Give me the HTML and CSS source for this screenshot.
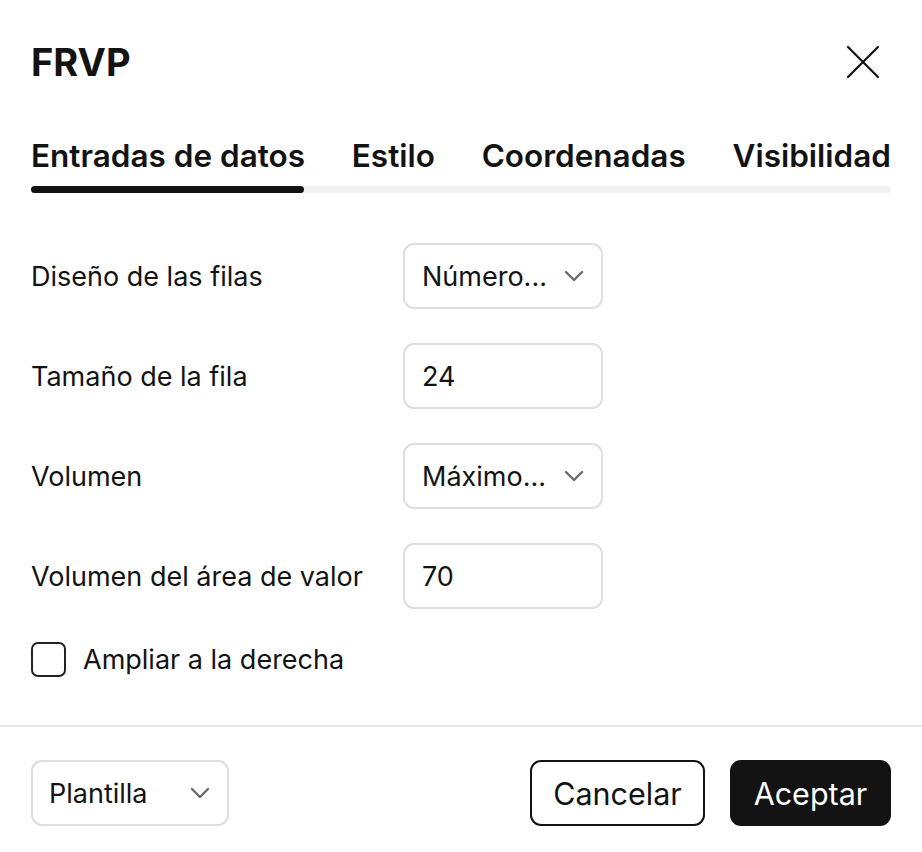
FILE: index.html
```html
<!DOCTYPE html>
<html lang="es">
<head>
<meta charset="utf-8">
<title>FRVP</title>
<link rel="stylesheet" href="styles.css">
</head>
<body>
<div class="dialog">
  <header class="header">
    <h1 class="title">FRVP</h1>
    <button class="close" aria-label="Cerrar">
      <svg width="34" height="34" viewBox="0 0 34 34"><path d="M2 2 L32 32 M32 2 L2 32" stroke="#131313" stroke-width="2.2" stroke-linecap="round" fill="none"/></svg>
    </button>
  </header>
  <nav class="tabs">
    <span class="tab active">Entradas de datos</span>
    <span class="tab">Estilo</span>
    <span class="tab">Coordenadas</span>
    <span class="tab">Visibilidad</span>
  </nav>
  <div class="track"><div class="indicator"></div></div>

  <div class="form">
    <label class="label">Diseño de las filas</label>
    <div class="control select"><span class="value">Número...</span><svg class="chev" width="20" height="12" viewBox="0 0 20 12"><path d="M2 2 L10 10 L18 2" stroke="#6a6a6a" stroke-width="2.4" fill="none" stroke-linecap="round" stroke-linejoin="round"/></svg></div>

    <label class="label">Tamaño de la fila</label>
    <div class="control"><span class="value">24</span></div>

    <label class="label">Volumen</label>
    <div class="control select"><span class="value">Máximo...</span><svg class="chev" width="20" height="12" viewBox="0 0 20 12"><path d="M2 2 L10 10 L18 2" stroke="#6a6a6a" stroke-width="2.4" fill="none" stroke-linecap="round" stroke-linejoin="round"/></svg></div>

    <label class="label">Volumen del área de valor</label>
    <div class="control"><span class="value">70</span></div>
  </div>

  <div class="check-row">
    <span class="checkbox"></span>
    <span class="check-label">Ampliar a la derecha</span>
  </div>

  <div class="separator"></div>

  <footer class="footer">
    <div class="control select template"><span class="value">Plantilla</span><svg class="chev" width="20" height="12" viewBox="0 0 20 12"><path d="M2 2 L10 10 L18 2" stroke="#6a6a6a" stroke-width="2.4" fill="none" stroke-linecap="round" stroke-linejoin="round"/></svg></div>
    <div class="buttons">
      <button class="btn btn-secondary">Cancelar</button>
      <button class="btn btn-primary">Aceptar</button>
    </div>
  </footer>
</div>
</body>
</html>
```
FILE: styles.css
```css
* { box-sizing: border-box; }
html, body { margin: 0; padding: 0; background: #ffffff; }
body {
  font-family: Inter, "Noto Sans", "Liberation Sans", sans-serif;
  color: #131313;
}
.dialog {
  width: 922px;
  padding: 0 31px;
}
.header {
  height: 124px;
  display: flex;
  align-items: center;
  justify-content: space-between;
}
.title {
  margin: 0;
  font-size: 38px;
  font-weight: 700;
  line-height: 1;
}
.close {
  border: 0;
  background: none;
  padding: 0;
  margin-right: 11px;
  width: 34px;
  height: 34px;
  display: flex;
}
.tabs {
  height: 62px;
  display: flex;
  align-items: center;
  justify-content: space-between;
}
.tab {
  font-size: 31.5px;
  font-weight: 600;
  white-space: nowrap;
}
.track {
  height: 7px;
  background: #f2f2f2;
  border-radius: 4px;
}
.indicator {
  width: 273px;
  height: 7px;
  background: #131313;
  border-radius: 4px;
}
.form {
  margin-top: 50px;
  display: grid;
  grid-template-columns: 372px 200px;
  grid-auto-rows: 66px;
  row-gap: 34px;
  align-items: center;
}
.label {
  font-size: 27px;
  white-space: nowrap;
}
.control {
  height: 66px;
  border: 2px solid #dedede;
  border-radius: 11px;
  display: flex;
  align-items: center;
  justify-content: space-between;
  padding: 0 17px 0 17px;
  font-size: 27px;
}
.chev { display: block; }
.check-row {
  margin-top: 33px;
  display: flex;
  align-items: center;
  gap: 17px;
}
.checkbox {
  width: 35px;
  height: 35px;
  border: 2px solid #222;
  border-radius: 7px;
}
.check-label { font-size: 27px; }
.separator {
  margin: 48px -31px 0;
  height: 2px;
  background: #e9e9e9;
}
.footer {
  margin-top: 33px;
  display: flex;
  justify-content: space-between;
  align-items: center;
}
.template { width: 198px; padding-left: 16px; }
.buttons { display: flex; gap: 25px; }
.btn {
  height: 66px;
  border-radius: 11px;
  font-family: inherit;
  font-size: 30.5px;
  padding: 0 20px;
  cursor: pointer;
}
.btn-secondary {
  width: 175px;
  background: #fff;
  border: 2px solid #131313;
  color: #131313;
}
.btn-primary {
  width: 161px;
  background: #131313;
  border: 2px solid #131313;
  color: #fff;
}
```
